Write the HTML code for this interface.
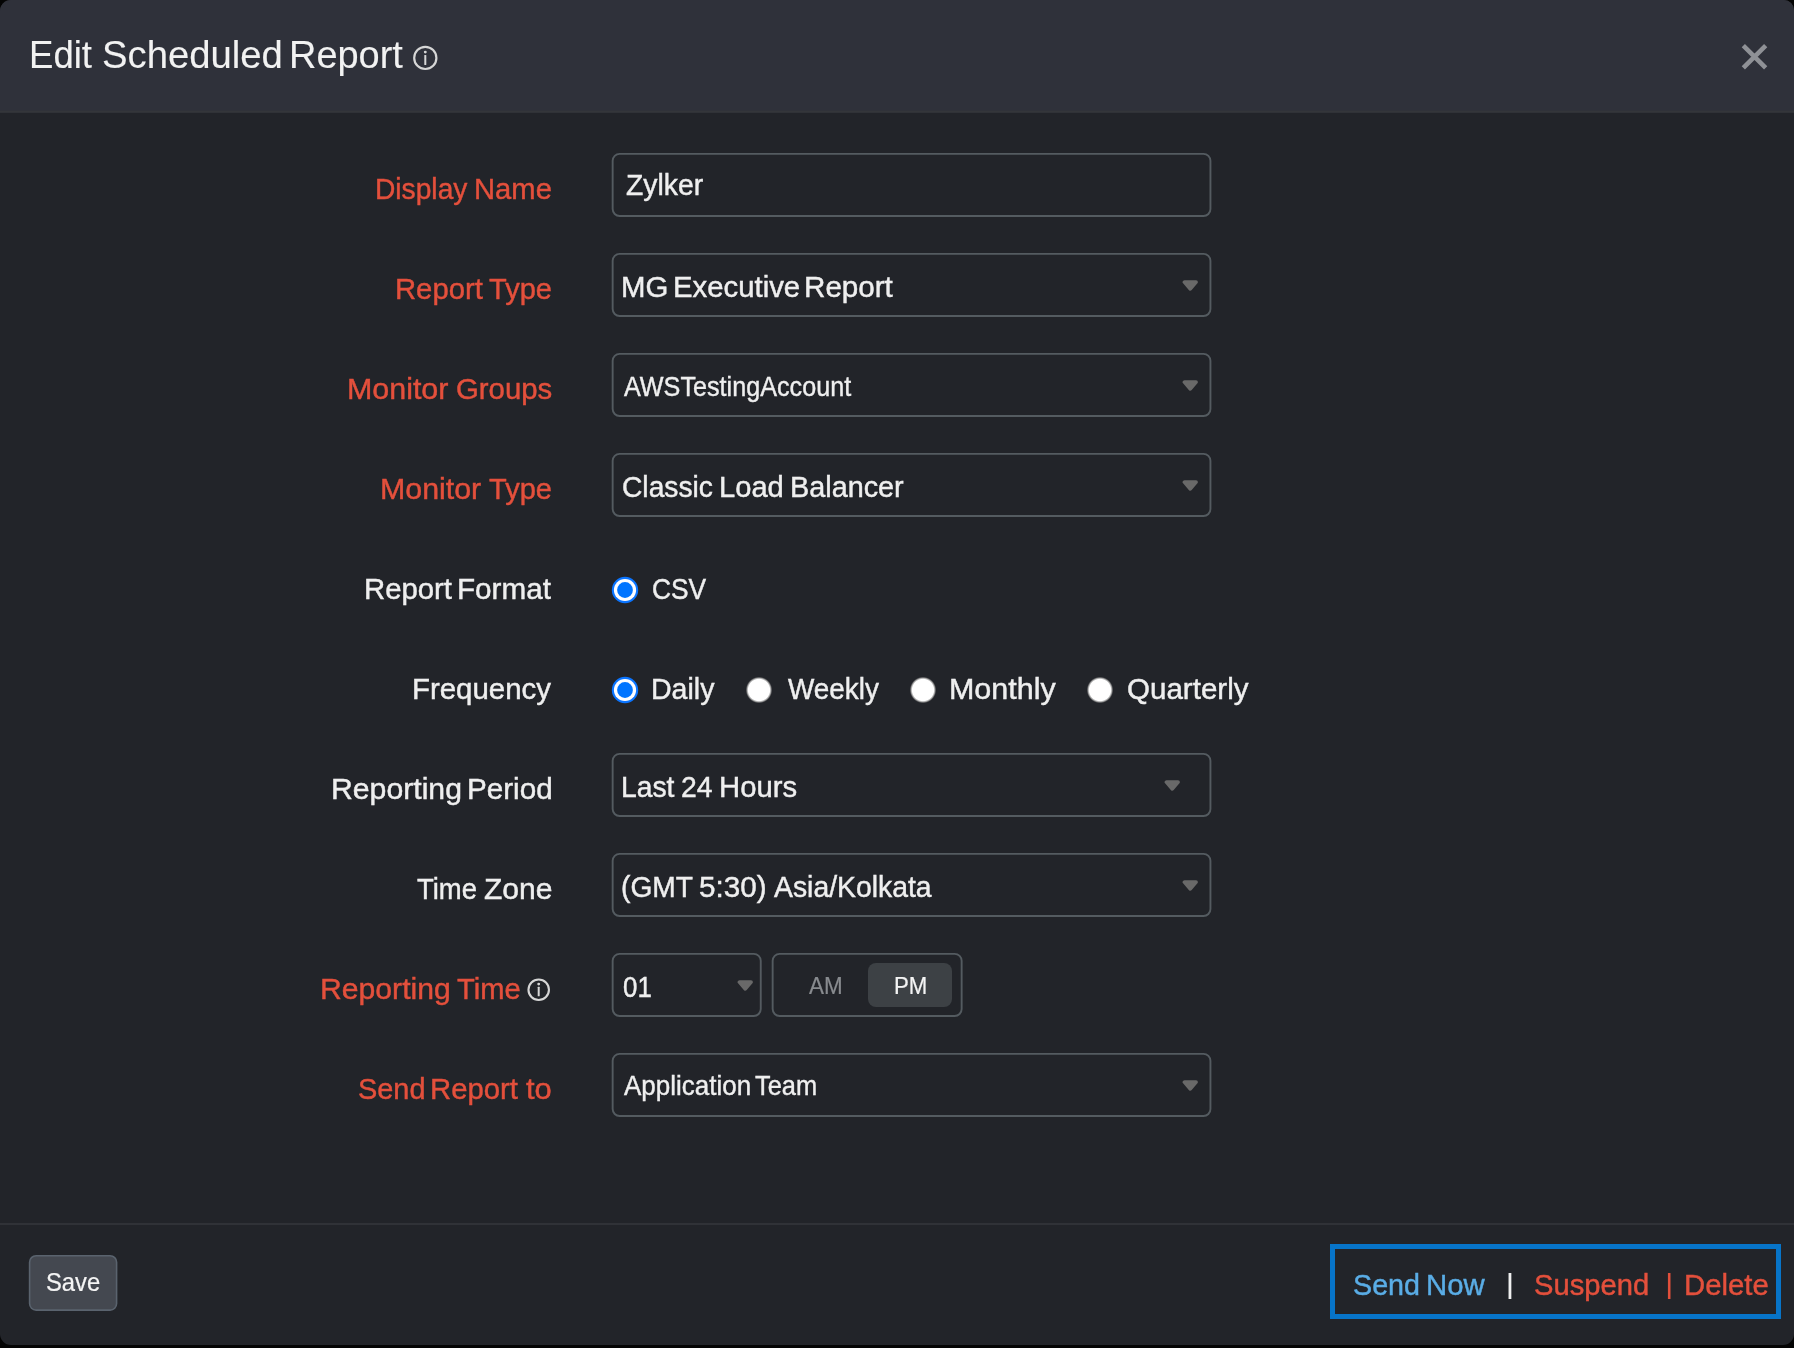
<!DOCTYPE html>
<html><head><meta charset="utf-8">
<style>
html,body{margin:0;padding:0;background:#040404;}
body{width:1794px;height:1348px;overflow:hidden;position:relative;font-family:"Liberation Sans",sans-serif;color:#f0f0f0;}
#panel{position:absolute;left:0;top:0;width:1794px;height:1344.5px;background:#222429;border-radius:11px 10px 11px 11px;overflow:hidden;will-change:transform;}
#hdr{position:absolute;left:0;top:0;width:1794px;height:113px;background:linear-gradient(#2f313a 0,#2f313a 110px,#303239 110px,#303239 111px,#34363a 111px,#34363a 112px,#303237 112px,#303237 113px);}
.tx{position:absolute;display:block;white-space:nowrap;line-height:1;transform-origin:0 0;}
.arr{position:absolute;width:17px;height:11px;}
#line{position:absolute;left:0;top:1223px;width:1794px;height:2px;background:#303237;}
#bluebox{position:absolute;left:1329.9px;top:1244.1px;width:451.1px;height:74.6px;box-sizing:border-box;border:5px solid #0774c8;}
</style></head><body>
<div id="panel">
<div id="hdr"></div>
<svg width="0" height="0" style="position:absolute"><defs><radialGradient id="rg" cx="0.5" cy="0.5" r="0.5"><stop offset="0" stop-color="#fff"/><stop offset="0.79" stop-color="#fff"/><stop offset="0.9" stop-color="#8c8c8c"/><stop offset="1" stop-color="#3a3b40" stop-opacity="0"/></radialGradient></defs></svg>



<svg style="position:absolute;left:0;top:0" width="1794" height="1344" viewBox="0 0 1794 1344"><circle cx="425.3" cy="57.9" r="11.10" fill="none" stroke="#d6d6d6" stroke-width="2.2"/><rect x="424.30" y="54.9" width="2.0" height="10.10" rx="0.6" fill="#d6d6d6"/><circle cx="425.3" cy="52.1" r="1.45" fill="#d6d6d6"/><circle cx="538.7" cy="989.75" r="10.25" fill="none" stroke="#d6d6d6" stroke-width="2.1"/><rect x="537.70" y="986.7" width="2.0" height="9.60" rx="0.6" fill="#d6d6d6"/><circle cx="538.7" cy="984.1" r="1.45" fill="#d6d6d6"/></svg>
<svg style="position:absolute;left:0;top:0" width="1794" height="1344" viewBox="0 0 1794 1344"><path d="M1743.33 45.53 L1765.67 67.87 M1765.67 45.53 L1743.33 67.87" stroke="#8f9196" stroke-width="4.6" fill="none"/></svg>
<svg style="position:absolute;left:0;top:0" width="1794" height="1344" viewBox="0 0 1794 1344"><rect x="612.65" y="153.85" width="597.80" height="62.20" rx="7" ry="7" fill="none" stroke="#545b60" stroke-width="1.9"/><rect x="612.65" y="253.85" width="597.80" height="62.20" rx="7" ry="7" fill="none" stroke="#545b60" stroke-width="1.9"/><rect x="612.65" y="353.85" width="597.80" height="62.20" rx="7" ry="7" fill="none" stroke="#545b60" stroke-width="1.9"/><rect x="612.65" y="453.85" width="597.80" height="62.20" rx="7" ry="7" fill="none" stroke="#545b60" stroke-width="1.9"/><rect x="612.65" y="753.85" width="597.80" height="62.20" rx="7" ry="7" fill="none" stroke="#545b60" stroke-width="1.9"/><rect x="612.65" y="853.85" width="597.80" height="62.20" rx="7" ry="7" fill="none" stroke="#545b60" stroke-width="1.9"/><rect x="612.65" y="1053.85" width="597.80" height="62.20" rx="7" ry="7" fill="none" stroke="#545b60" stroke-width="1.9"/><rect x="612.65" y="953.85" width="148.10" height="62.20" rx="7" ry="7" fill="none" stroke="#545b60" stroke-width="1.9"/><rect x="772.65" y="953.85" width="189.00" height="62.20" rx="7" ry="7" fill="none" stroke="#545b60" stroke-width="1.9"/></svg>
<svg class="arr" style="left:1182.2px;top:279.5px" viewBox="0 0 17 11"><path d="M2.5 2.1 H14 L8.25 8.8 Z" fill="#696969" stroke="#696969" stroke-width="3.8" stroke-linejoin="round"/></svg>
<svg class="arr" style="left:1182.2px;top:379.5px" viewBox="0 0 17 11"><path d="M2.5 2.1 H14 L8.25 8.8 Z" fill="#696969" stroke="#696969" stroke-width="3.8" stroke-linejoin="round"/></svg>
<svg class="arr" style="left:1182.2px;top:479.5px" viewBox="0 0 17 11"><path d="M2.5 2.1 H14 L8.25 8.8 Z" fill="#696969" stroke="#696969" stroke-width="3.8" stroke-linejoin="round"/></svg>
<svg class="arr" style="left:1164.2px;top:779.5px" viewBox="0 0 17 11"><path d="M2.5 2.1 H14 L8.25 8.8 Z" fill="#696969" stroke="#696969" stroke-width="3.8" stroke-linejoin="round"/></svg>
<svg class="arr" style="left:1182.2px;top:879.5px" viewBox="0 0 17 11"><path d="M2.5 2.1 H14 L8.25 8.8 Z" fill="#696969" stroke="#696969" stroke-width="3.8" stroke-linejoin="round"/></svg>
<svg class="arr" style="left:737.0px;top:979.5px" viewBox="0 0 17 11"><path d="M2.5 2.1 H14 L8.25 8.8 Z" fill="#696969" stroke="#696969" stroke-width="3.8" stroke-linejoin="round"/></svg>
<svg class="arr" style="left:1182.2px;top:1079.5px" viewBox="0 0 17 11"><path d="M2.5 2.1 H14 L8.25 8.8 Z" fill="#696969" stroke="#696969" stroke-width="3.8" stroke-linejoin="round"/></svg>


<svg style="position:absolute;left:609.6px;top:574.9px" width="30" height="30" viewBox="0 0 30 30"><circle cx="15" cy="15" r="13.2" fill="#0a74ff"/><circle cx="15" cy="15" r="11.1" fill="#fdfdff"/><circle cx="15" cy="15" r="7.9" fill="#0074ff"/></svg>
<svg style="position:absolute;left:609.6px;top:674.9px" width="30" height="30" viewBox="0 0 30 30"><circle cx="15" cy="15" r="13.2" fill="#0a74ff"/><circle cx="15" cy="15" r="11.1" fill="#fdfdff"/><circle cx="15" cy="15" r="7.9" fill="#0074ff"/></svg>
<svg style="position:absolute;left:743.6px;top:674.9px" width="30" height="30" viewBox="0 0 30 30"><circle cx="15" cy="15" r="13.5" fill="url(#rg)"/></svg>
<svg style="position:absolute;left:907.6px;top:674.9px" width="30" height="30" viewBox="0 0 30 30"><circle cx="15" cy="15" r="13.5" fill="url(#rg)"/></svg>
<svg style="position:absolute;left:1084.6px;top:674.9px" width="30" height="30" viewBox="0 0 30 30"><circle cx="15" cy="15" r="13.5" fill="url(#rg)"/></svg>
<div style="position:absolute;left:867.8px;top:962.8px;width:84.4px;height:44.2px;background:#3d4145;border-radius:8px"></div>

<div id="line"></div>
<svg style="position:absolute;left:0;top:0" width="1794" height="1344" viewBox="0 0 1794 1344"><rect x="29.6" y="1255.7" width="87.0" height="54.4" rx="6.5" ry="6.5" fill="#444850" stroke="#5a636e" stroke-width="1.6"/></svg>
<div id="bluebox"></div>
<div class="grp">
<span class="tx" style="left:28.79px;top:35.10px;font-size:39.1px;color:#f2f2f2;-webkit-text-stroke:0.1px #f2f2f2;transform:scaleX(0.9354)">Edit</span>
<span class="tx" style="left:101.50px;top:35.10px;font-size:39.1px;color:#f2f2f2;-webkit-text-stroke:0.1px #f2f2f2;transform:scaleX(0.9794)">Scheduled</span>
<span class="tx" style="left:289.09px;top:35.10px;font-size:39.1px;color:#f2f2f2;-webkit-text-stroke:0.1px #f2f2f2;transform:scaleX(0.9712)">Report</span>
</div>
<div class="grp">
<span class="tx" style="left:374.71px;top:173.50px;font-size:30px;color:#e4503c;-webkit-text-stroke:0.45px #e4503c;transform:scaleX(0.9392)">Display</span>
<span class="tx" style="left:474.33px;top:173.50px;font-size:30px;color:#e4503c;-webkit-text-stroke:0.45px #e4503c;transform:scaleX(0.9730)">Name</span>
</div>
<div class="grp">
<span class="tx" style="left:394.53px;top:273.50px;font-size:30px;color:#e4503c;-webkit-text-stroke:0.45px #e4503c;transform:scaleX(0.9748)">Report</span>
<span class="tx" style="left:489.28px;top:273.50px;font-size:30px;color:#e4503c;-webkit-text-stroke:0.45px #e4503c;transform:scaleX(0.9675)">Type</span>
</div>
<div class="grp">
<span class="tx" style="left:346.84px;top:373.50px;font-size:30px;color:#e4503c;-webkit-text-stroke:0.45px #e4503c;transform:scaleX(1.0137)">Monitor</span>
<span class="tx" style="left:455.78px;top:373.50px;font-size:30px;color:#e4503c;-webkit-text-stroke:0.45px #e4503c;transform:scaleX(0.9785)">Groups</span>
</div>
<div class="grp">
<span class="tx" style="left:380.05px;top:473.50px;font-size:30px;color:#e4503c;-webkit-text-stroke:0.45px #e4503c;transform:scaleX(1.0116)">Monitor</span>
<span class="tx" style="left:489.28px;top:473.50px;font-size:30px;color:#e4503c;-webkit-text-stroke:0.45px #e4503c;transform:scaleX(0.9675)">Type</span>
</div>
<div class="grp">
<span class="tx" style="left:363.82px;top:573.50px;font-size:30px;color:#efefef;-webkit-text-stroke:0.45px #efefef;transform:scaleX(0.9771)">Report</span>
<span class="tx" style="left:457.30px;top:573.50px;font-size:30px;color:#efefef;-webkit-text-stroke:0.45px #efefef;transform:scaleX(0.9880)">Format</span>
</div>
<div class="grp">
<span class="tx" style="left:412.02px;top:673.50px;font-size:30px;color:#efefef;-webkit-text-stroke:0.45px #efefef;transform:scaleX(0.9802)">Frequency</span>
</div>
<div class="grp">
<span class="tx" style="left:331.06px;top:773.50px;font-size:30px;color:#efefef;-webkit-text-stroke:0.45px #efefef;transform:scaleX(1.0068)">Reporting</span>
<span class="tx" style="left:466.80px;top:773.50px;font-size:30px;color:#efefef;-webkit-text-stroke:0.45px #efefef;transform:scaleX(0.9875)">Period</span>
</div>
<div class="grp">
<span class="tx" style="left:417.00px;top:873.50px;font-size:30px;color:#efefef;-webkit-text-stroke:0.45px #efefef;transform:scaleX(0.9147)">Time</span>
<span class="tx" style="left:483.78px;top:873.50px;font-size:30px;color:#efefef;-webkit-text-stroke:0.45px #efefef;transform:scaleX(1.0022)">Zone</span>
</div>
<div class="grp">
<span class="tx" style="left:319.96px;top:973.50px;font-size:30px;color:#e4503c;-webkit-text-stroke:0.45px #e4503c;transform:scaleX(1.0052)">Reporting</span>
<span class="tx" style="left:456.58px;top:973.50px;font-size:30px;color:#e4503c;-webkit-text-stroke:0.45px #e4503c;transform:scaleX(0.9709)">Time</span>
</div>
<div class="grp">
<span class="tx" style="left:357.51px;top:1073.51px;font-size:30px;color:#e4503c;-webkit-text-stroke:0.45px #e4503c;transform:scaleX(0.9634)">Send</span>
<span class="tx" style="left:430.13px;top:1073.51px;font-size:30px;color:#e4503c;-webkit-text-stroke:0.45px #e4503c;transform:scaleX(0.9759)">Report</span>
<span class="tx" style="left:526.28px;top:1073.51px;font-size:30px;color:#e4503c;-webkit-text-stroke:0.45px #e4503c;transform:scaleX(1.0301)">to</span>
</div>
<div class="grp">
<span class="tx" style="left:626.33px;top:169.66px;font-size:29.7px;color:#efefef;-webkit-text-stroke:0.45px #efefef;transform:scaleX(0.9553)">Zylker</span>
</div>
<div class="grp">
<span class="tx" style="left:621.22px;top:271.66px;font-size:29.7px;color:#efefef;-webkit-text-stroke:0.45px #efefef;transform:scaleX(0.9891)">MG</span>
<span class="tx" style="left:672.83px;top:271.66px;font-size:29.7px;color:#efefef;-webkit-text-stroke:0.45px #efefef;transform:scaleX(0.9876)">Executive</span>
<span class="tx" style="left:804.31px;top:271.66px;font-size:29.7px;color:#efefef;-webkit-text-stroke:0.45px #efefef;transform:scaleX(0.9971)">Report</span>
</div>
<div class="grp">
<span class="tx" style="left:623.53px;top:372.58px;font-size:27.2px;color:#efefef;-webkit-text-stroke:0.4px #efefef;transform:scaleX(0.9260)">AWSTestingAccount</span>
</div>
<div class="grp">
<span class="tx" style="left:621.81px;top:471.66px;font-size:29.7px;color:#efefef;-webkit-text-stroke:0.45px #efefef;transform:scaleX(0.9503)">Classic</span>
<span class="tx" style="left:719.14px;top:471.66px;font-size:29.7px;color:#efefef;-webkit-text-stroke:0.45px #efefef;transform:scaleX(0.9807)">Load</span>
<span class="tx" style="left:789.87px;top:471.66px;font-size:29.7px;color:#efefef;-webkit-text-stroke:0.45px #efefef;transform:scaleX(0.9704)">Balancer</span>
</div>
<div class="grp">
<span class="tx" style="left:621.20px;top:771.66px;font-size:29.7px;color:#efefef;-webkit-text-stroke:0.45px #efefef;transform:scaleX(0.9528)">Last</span>
<span class="tx" style="left:680.81px;top:771.66px;font-size:29.7px;color:#efefef;-webkit-text-stroke:0.45px #efefef;transform:scaleX(0.9536)">24</span>
<span class="tx" style="left:718.63px;top:771.66px;font-size:29.7px;color:#efefef;-webkit-text-stroke:0.45px #efefef;transform:scaleX(0.9856)">Hours</span>
</div>
<div class="grp">
<span class="tx" style="left:621.18px;top:871.66px;font-size:29.7px;color:#efefef;-webkit-text-stroke:0.45px #efefef;transform:scaleX(0.9486)">(GMT</span>
<span class="tx" style="left:698.87px;top:871.66px;font-size:29.7px;color:#efefef;-webkit-text-stroke:0.45px #efefef;transform:scaleX(0.9985)">5:30)</span>
<span class="tx" style="left:773.84px;top:871.66px;font-size:29.7px;color:#efefef;-webkit-text-stroke:0.45px #efefef;transform:scaleX(0.9553)">Asia/Kolkata</span>
</div>
<div class="grp">
<span class="tx" style="left:622.50px;top:971.66px;font-size:29.7px;color:#efefef;-webkit-text-stroke:0.45px #efefef;transform:scaleX(0.8711)">01</span>
</div>
<div class="grp">
<span class="tx" style="left:623.54px;top:1071.78px;font-size:27.2px;color:#efefef;-webkit-text-stroke:0.4px #efefef;transform:scaleX(0.9564)">Application</span>
<span class="tx" style="left:754.93px;top:1071.78px;font-size:27.2px;color:#efefef;-webkit-text-stroke:0.4px #efefef;transform:scaleX(0.9349)">Team</span>
</div>
<div class="grp">
<span class="tx" style="left:652.19px;top:573.76px;font-size:29.7px;color:#efefef;-webkit-text-stroke:0.45px #efefef;transform:scaleX(0.8867)">CSV</span>
</div>
<div class="grp">
<span class="tx" style="left:651.19px;top:673.76px;font-size:29.7px;color:#efefef;-webkit-text-stroke:0.45px #efefef;transform:scaleX(0.9617)">Daily</span>
</div>
<div class="grp">
<span class="tx" style="left:787.82px;top:673.76px;font-size:29.7px;color:#efefef;-webkit-text-stroke:0.45px #efefef;transform:scaleX(0.9398)">Weekly</span>
</div>
<div class="grp">
<span class="tx" style="left:948.74px;top:673.76px;font-size:29.7px;color:#efefef;-webkit-text-stroke:0.45px #efefef;transform:scaleX(1.0260)">Monthly</span>
</div>
<div class="grp">
<span class="tx" style="left:1126.53px;top:673.76px;font-size:29.7px;color:#efefef;-webkit-text-stroke:0.45px #efefef;transform:scaleX(0.9954)">Quarterly</span>
</div>
<div class="grp">
<span class="tx" style="left:808.65px;top:975.19px;font-size:23.4px;color:#888b8f;-webkit-text-stroke:0.2px #888b8f;transform:scaleX(0.9593)">AM</span>
</div>
<div class="grp">
<span class="tx" style="left:893.64px;top:975.19px;font-size:23.4px;color:#f4f4f4;-webkit-text-stroke:0.2px #f4f4f4;transform:scaleX(0.9506)">PM</span>
</div>
<div class="grp">
<span class="tx" style="left:46.26px;top:1269.87px;font-size:25.2px;color:#f4f4f4;-webkit-text-stroke:0.2px #f4f4f4;transform:scaleX(0.9441)">Save</span>
</div>
<div class="grp">
<span class="tx" style="left:1353.12px;top:1269.61px;font-size:30px;color:#5aade6;-webkit-text-stroke:0.45px #5aade6;transform:scaleX(0.9559)">Send</span>
<span class="tx" style="left:1426.22px;top:1269.61px;font-size:30px;color:#5aade6;-webkit-text-stroke:0.45px #5aade6;transform:scaleX(0.9769)">Now</span>
</div>
<div class="grp">
<span class="tx" style="left:1506.18px;top:1268.56px;font-size:28.4px;color:#efefef;-webkit-text-stroke:0.2px #efefef;transform:scaleX(1.0000)">|</span>
</div>
<div class="grp">
<span class="tx" style="left:1533.70px;top:1269.61px;font-size:30px;color:#e4503c;-webkit-text-stroke:0.45px #e4503c;transform:scaleX(0.9722)">Suspend</span>
</div>
<div class="grp">
<span class="tx" style="left:1665.48px;top:1268.56px;font-size:28.4px;color:#e4503c;-webkit-text-stroke:0.2px #e4503c;transform:scaleX(1.0000)">|</span>
</div>
<div class="grp">
<span class="tx" style="left:1684.42px;top:1269.61px;font-size:30px;color:#e4503c;-webkit-text-stroke:0.45px #e4503c;transform:scaleX(0.9770)">Delete</span>
</div>
</div>
</body></html>
